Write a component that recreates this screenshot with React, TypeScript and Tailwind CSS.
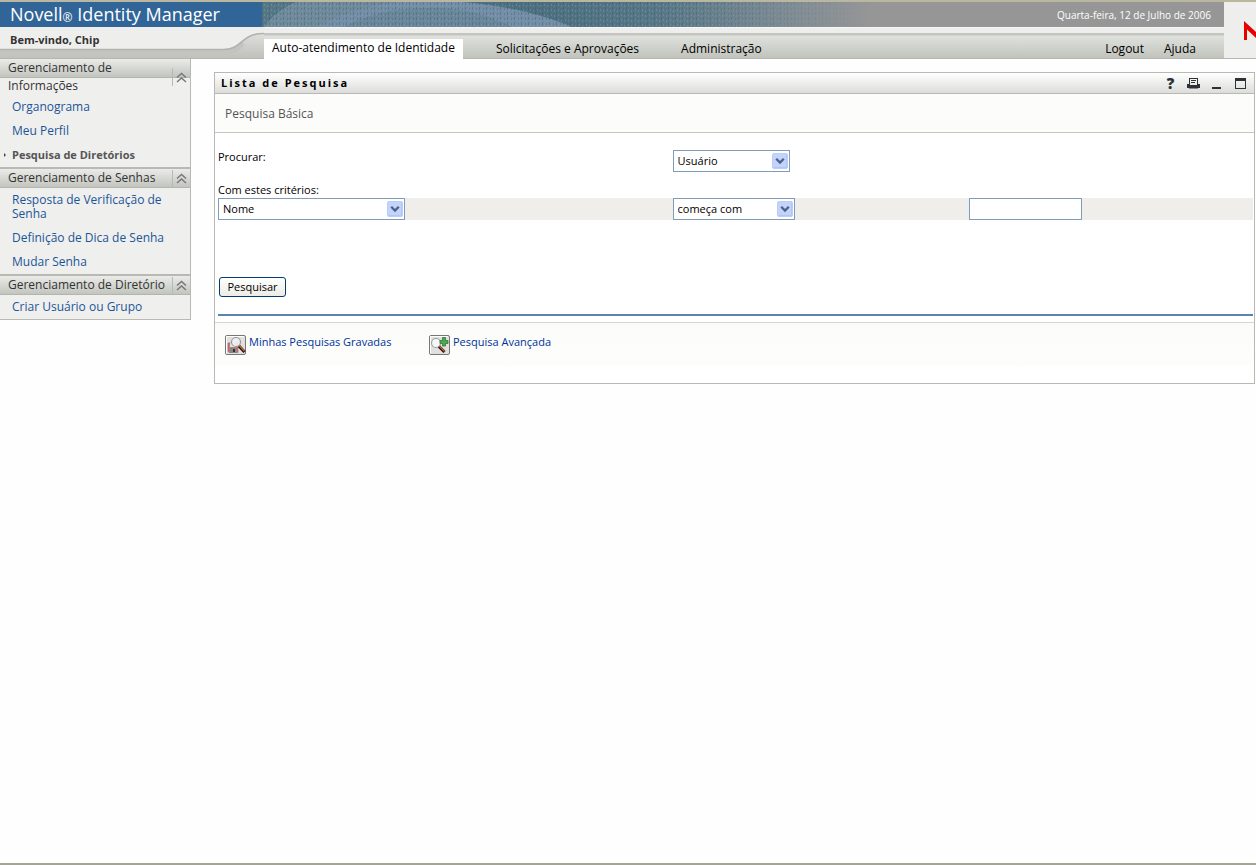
import React, { useState } from "react";

type Section = {
    title: string
    links: string[]
}

const sections: Section[] = [
    { title: 'Gerenciamento de Informações', links: ['Organograma', 'Meu Perfil', 'Pesquisa de Diretórios'] },
    { title: 'Gerenciamento de Senhas', links: ['Resposta de Verificação de Senha', 'Definição de Dica de Senha', 'Mudar Senha'] },
    { title: 'Gerenciamento de Diretório', links: ['Criar Usuário ou Grupo'] },
]

const BannerArt = () => (
    <svg className="h-full w-[610px]" viewBox="0 0 610 25" preserveAspectRatio="none" aria-hidden="true">
        <defs>
            <linearGradient id="fade" x1="0" x2="1" y1="0" y2="0">
                <stop offset="0" stopColor="#547886" />
                <stop offset="0.45" stopColor="#4c7080" />
                <stop offset="0.65" stopColor="#587887" />
                <stop offset="0.85" stopColor="#7d8b94" />
                <stop offset="1" stopColor="#969696" />
            </linearGradient>
            <linearGradient id="dotFade" x1="0" x2="1" y1="0" y2="0">
                <stop offset="0" stopColor="#fff" />
                <stop offset="0.7" stopColor="#fff" />
                <stop offset="1" stopColor="#000" />
            </linearGradient>
            <pattern id="weave" width="7" height="5" patternUnits="userSpaceOnUse">
                <rect x="0" y="0" width="1" height="3" fill="#2f5668" />
                <rect x="2" y="2" width="1" height="2" fill="#93a6b4" />
                <rect x="4" y="1" width="1" height="2" fill="#3c6272" />
                <rect x="5" y="3" width="1" height="2" fill="#8fa3b0" />
            </pattern>
            <mask id="dotMask">
                <rect width="610" height="25" fill="url(#dotFade)" />
            </mask>
        </defs>
        <rect width="610" height="25" fill="url(#fade)" />
        <path d="M2 25C10 14 20 6 34 0H200C240 4 280 12 310 25Z" fill="#6f8a9a" />
        <path d="M54 25C80 11 108 3 138 0H200C248 4 282 13 308 25H250C225 13 205 7 178 6C135 5 106 12 82 25Z" fill="#7690ac" opacity="0.7" />
        <path d="M82 25C106 12 135 5 178 6C205 7 225 13 250 25Z" fill="#68849a" opacity="0.7" />
        <rect width="610" height="25" fill="url(#weave)" opacity="0.35" mask="url(#dotMask)" />
    </svg>
)

const WelcomeCurve = () => (
    <svg className="absolute left-0 top-0" width="264" height="31" viewBox="0 0 264 31" aria-hidden="true">
        <defs>
            <linearGradient id="under" x1="0" x2="0" y1="0" y2="1">
                <stop offset="0" stopColor="#dfe0dc" />
                <stop offset="1" stopColor="#c0c1bb" />
            </linearGradient>
        </defs>
        <path d="M0 0H264V6C240 6 243 22 223 22H0Z" fill="#eeeeed" />
        <path d="M0 22H223C243 22 240 6 264 6V31H0Z" fill="url(#under)" />
        <path d="M0 25H225C238 24 239 20 243 16" fill="none" stroke="#c3c4bf" strokeWidth="5" />
        <path d="M0 22.5H223C243 22.5 240 6.5 264 6.5" fill="none" stroke="#b2b3ae" strokeWidth="1.6" />
    </svg>
)

const Collapse = () => (
    <svg width="11" height="11" viewBox="0 0 11 11" fill="none" stroke="#777" strokeWidth="1.5" aria-hidden="true">
        <path d="M1 5.5L5.5 1.5L10 5.5M1 10L5.5 6L10 10" />
    </svg>
)

type SelectProps = {
    id: string
    label?: string
    width: string
    options: string[]
}

const Select = ({ id, label, width, options }: SelectProps) => (
    <div className={`relative ${width}`}>
        <select id={id} aria-label={label} className="block h-[22px] w-full appearance-none border border-[#7f9db9] bg-white pl-1 pr-5 text-[11px] leading-5 text-black">
            {options.map((o) => <option key={o}>{o}</option>)}
        </select>
        <svg className="pointer-events-none absolute right-[2px] top-[3px]" width="16" height="16" viewBox="0 0 16 16" aria-hidden="true">
            <rect x="0.5" y="0.5" width="15" height="15" rx="1.5" fill="#c3d3fb" stroke="#bccdf8" />
            <path d="M1.5 14.5H14.5V1.5" fill="none" stroke="#b2c6f5" />
            <path d="M4.2 5.8L8 9.6L11.8 5.8" fill="none" stroke="#4d6185" strokeWidth="2.3" />
        </svg>
    </div>
)

const IconFrame = () => (
    <>
        <rect x="0.5" y="0.5" width="20" height="19" rx="1.5" fill="#e0e0de" stroke="#77777a" />
        <path d="M1.5 18.5V1.5H19" fill="none" stroke="#fff" />
    </>
)

const SavedIcon = () => (
    <svg width="21" height="20" viewBox="0 0 21 20" className="shrink-0" aria-hidden="true">
        <IconFrame />
        <path d="M3 8H13V17.500H4L3 16.500Z" fill="#c07873" stroke="#8d6665" strokeWidth="0.6" />
        <rect x="5" y="8" width="6" height="4" fill="#e4e0df" />
        <rect x="5" y="13" width="6" height="5" fill="#85858b" />
        <rect x="8" y="14" width="2" height="3" fill="#333" />
        <circle cx="11" cy="7" r="4.5" fill="#eef1f3" fillOpacity="0.9" stroke="#9b9b9f" strokeWidth="1.2" />
        <path d="M14 11L19.5 17" stroke="#1d1210" strokeWidth="3" />
        <path d="M14.3 10.6L19.3 16.2" stroke="#e0703a" strokeWidth="1.2" />
    </svg>
)

const AdvancedIcon = () => (
    <svg width="21" height="20" viewBox="0 0 21 20" className="shrink-0" aria-hidden="true">
        <IconFrame />
        <circle cx="7" cy="8" r="4.5" fill="#f6f7f7" stroke="#a0a0a2" strokeWidth="1.2" />
        <path d="M10 11.5L15.5 17" stroke="#1d1210" strokeWidth="3" />
        <path d="M10.3 11.1L15.5 16.3" stroke="#e0703a" strokeWidth="1.2" />
        <path d="M13.5 2.5H16.5V5.5H19V8.5H16.5V11H13.5V8.5H11V5.5H13.5Z" fill="#4fa557" stroke="#2c7a38" strokeWidth="0.8" />
    </svg>
)

const Header = () => (
    <header className="flex border-t-2 border-[#b9b7a0]">
        <div className="flex min-w-0 flex-1 flex-col">
            <div className="flex h-[25px] items-center bg-[#969696] text-white">
                <h1 className="flex h-full w-[262px] shrink-0 items-center whitespace-nowrap bg-[#316598] pl-[10px] text-[18px]">
                    Novell<span className="self-end text-[12px]">®</span>&nbsp;Identity Manager
                </h1>
                <div className="h-full min-w-0 flex-1 overflow-hidden">
                    <BannerArt />
                </div>
                <p className="w-[167px] shrink-0 whitespace-nowrap text-[10px] leading-4">Quarta-feira, 12 de Julho de 2006</p>
            </div>
            <nav className="relative flex h-8 items-end border-b border-[#b5b6b1] bg-[linear-gradient(#fff_0,#eeeeed_1px,#eeeeed_6px,#c4c5c0_6px,#c4c5c0_8px,#dfe1dd_9px,#c1c3bc_31px)] text-[12px] text-black">
                <WelcomeCurve />
                <p className="relative w-[264px] shrink-0 self-start pl-[10px] pt-[5px] text-[11px] font-bold leading-4 text-[#333]">Bem-vindo, Chip</p>
                <a href="#" className="relative -mb-px h-5 whitespace-nowrap bg-white px-2 leading-[18px]">Auto-atendimento de Identidade</a>
                <a href="#" className="ml-[33px] h-5 whitespace-nowrap leading-[22px]">Solicitações e Aprovações</a>
                <a href="#" className="ml-[42px] h-5 whitespace-nowrap leading-[22px]">Administração</a>
                <div className="ml-auto flex h-5 gap-5 pr-7 leading-[22px]">
                    <a href="#">Logout</a>
                    <a href="#">Ajuda</a>
                </div>
            </nav>
        </div>
        <div className="flex w-8 items-center justify-end overflow-hidden border-b border-[#b5b6b1] bg-[#eeeeed]">
            <svg width="12" height="19" viewBox="0 0 12 19" aria-label="Novell">
                <path d="M0 0L12 11V17L3 8.500V19H0Z" fill="#e60000" />
            </svg>
        </div>
    </header>
)

const Sidebar = () => {
    const [active, setActive] = useState('Pesquisa de Diretórios')
    const [closed, setClosed] = useState<string[]>([])

    const toggle = (title: string) => {
        setClosed(closed.includes(title) ? closed.filter((t) => t !== title) : [...closed, title])
    }

    return (
        <aside className="w-[191px] shrink-0 border-b border-r border-[#b8b9b3] bg-[#efefee] text-[12px]">
            {sections.map((s, i) => (
                <section key={s.title} className={i > 0 ? 'border-t-2 border-[#b8b9b3]' : ''}>
                    <div className="flex items-center bg-[linear-gradient(#ebece9_0,#c2c4be_18px,#b4b5b0_18px)] bg-[length:100%_19px] bg-no-repeat">
                        <h2 className={`flex-1 pl-2 leading-[18px] text-[#333] ${i > 0 ? 'pb-px' : 'pr-10'}`}>{s.title}</h2>
                        <button type="button" aria-label={s.title} onClick={() => toggle(s.title)} className="flex h-[18px] w-[18px] items-center justify-center border-l border-[#b8b9b3]">
                            <Collapse />
                        </button>
                    </div>
                    {!closed.includes(s.title) &&
                        <ul className="flex flex-col gap-[10px] py-[5px] leading-[14px]">
                            {s.links.map((l) => (
                                <li key={l} className="relative pl-3 pr-5">
                                    {l === active && <span className="absolute left-1 top-[5px] border-y-2 border-l-2 border-y-transparent border-l-[#444]" />}
                                    <a href="#" onClick={() => setActive(l)} className={`block ${l === active ? 'text-[11px] font-bold text-[#555]' : 'text-[#1c5596]'}`}>{l}</a>
                                </li>
                            ))}
                        </ul>
                    }
                </section>
            ))}
        </aside>
    )
}

const SearchPanel = () => (
    <main className="mb-4 ml-[23px] mr-px mt-[13px] min-w-0 flex-1 self-start border border-[#b8b9b3] bg-white text-[11px] text-black">
        <div className="flex h-[21px] items-center justify-between border-b border-[#b8b9b3] bg-linear-to-b from-white to-[#dcddda] pl-[6px] pr-2">
            <h2 className="text-[11px] font-bold tracking-[2px]">Lista de Pesquisa</h2>
            <div className="flex items-center gap-3 text-[#2c3235]">
                <button type="button" aria-label="Ajuda" className="w-[9px] text-[15px] font-extrabold leading-5">?</button>
                <button type="button" aria-label="Imprimir">
                    <svg width="13" height="11" viewBox="0 0 13 11" fill="currentColor">
                        <path d="M2 6V0H11V6H13V10H0V6ZM3 1V7H10V1Z" fillRule="evenodd" />
                        <path d="M4 2H9V3H4ZM4 4H8V5H4Z" />
                        <path d="M2 10H11V11H2Z" opacity="0.5" />
                    </svg>
                </button>
                <button type="button" aria-label="Minimizar">
                    <svg width="11" height="11" viewBox="0 0 11 11" fill="currentColor"><rect x="0" y="9" width="9" height="2" /></svg>
                </button>
                <button type="button" aria-label="Maximizar">
                    <svg width="11" height="11" viewBox="0 0 11 11" fill="currentColor"><path d="M0 0H11V11H0ZM1 3V10H10V3Z" fillRule="evenodd" /></svg>
                </button>
            </div>
        </div>
        <h3 className="border-b border-[#c4c5c0] bg-[#fcfcfb] pb-[9px] pl-[10px] pt-[11px] text-[12px] leading-[18px] text-[#555]">Pesquisa Básica</h3>

        <form className="pl-[3px] pr-px pt-[17px]" onSubmit={(e) => e.preventDefault()}>
            <div className="grid grid-cols-[455fr_297fr_284fr] items-start">
                <label htmlFor="kind" className="leading-[13px]">Procurar:</label>
                <Select id="kind" width="w-[117px]" options={['Usuário', 'Grupo']} />
            </div>
            <label htmlFor="attribute" className="block pb-[2px] pt-[11px] leading-[13px]">Com estes critérios:</label>
            <div className="grid grid-cols-[455fr_297fr_284fr] items-center bg-[#efeeea]">
                <Select id="attribute" width="w-[187px]" options={['Nome', 'Sobrenome']} />
                <Select id="operator" label="Operador" width="w-[122px]" options={['começa com', 'contém']} />
                <input type="text" aria-label="Valor" className="h-[22px] w-[113px] border border-[#7f9db9] bg-white px-1" />
            </div>
            <button type="submit" className="ml-px mt-[57px] block h-5 w-[67px] rounded-[3px] border border-[#003c74] bg-linear-to-b from-white to-[#ecebe5] leading-[18px]">Pesquisar</button>
            <div className="mt-[17px] h-[2px] bg-[#5a83b0]" />
        </form>

        <div className="mt-[6px] border-t border-[#d5d5d2] bg-[linear-gradient(#fbfbfa,#fdfdfc)] bg-[length:100%_43px] bg-no-repeat pb-7 pl-[10px] pt-3 text-[#003399]">
            <div className="flex items-start">
                <a href="#" className="flex w-[204px] gap-[3px] leading-[13px]"><SavedIcon />Minhas Pesquisas Gravadas</a>
                <a href="#" className="flex gap-[3px] leading-[13px]"><AdvancedIcon />Pesquisa Avançada</a>
            </div>
        </div>
    </main>
)

const App = () => {
    return (
        <div className="flex min-h-screen flex-col border-b-2 border-[#a5a597] bg-[#fefefe] font-['Open_Sans',sans-serif]">
            <Header />
            <div className="flex flex-1 items-start">
                <Sidebar />
                <SearchPanel />
            </div>
        </div>
    )
}

export default App
